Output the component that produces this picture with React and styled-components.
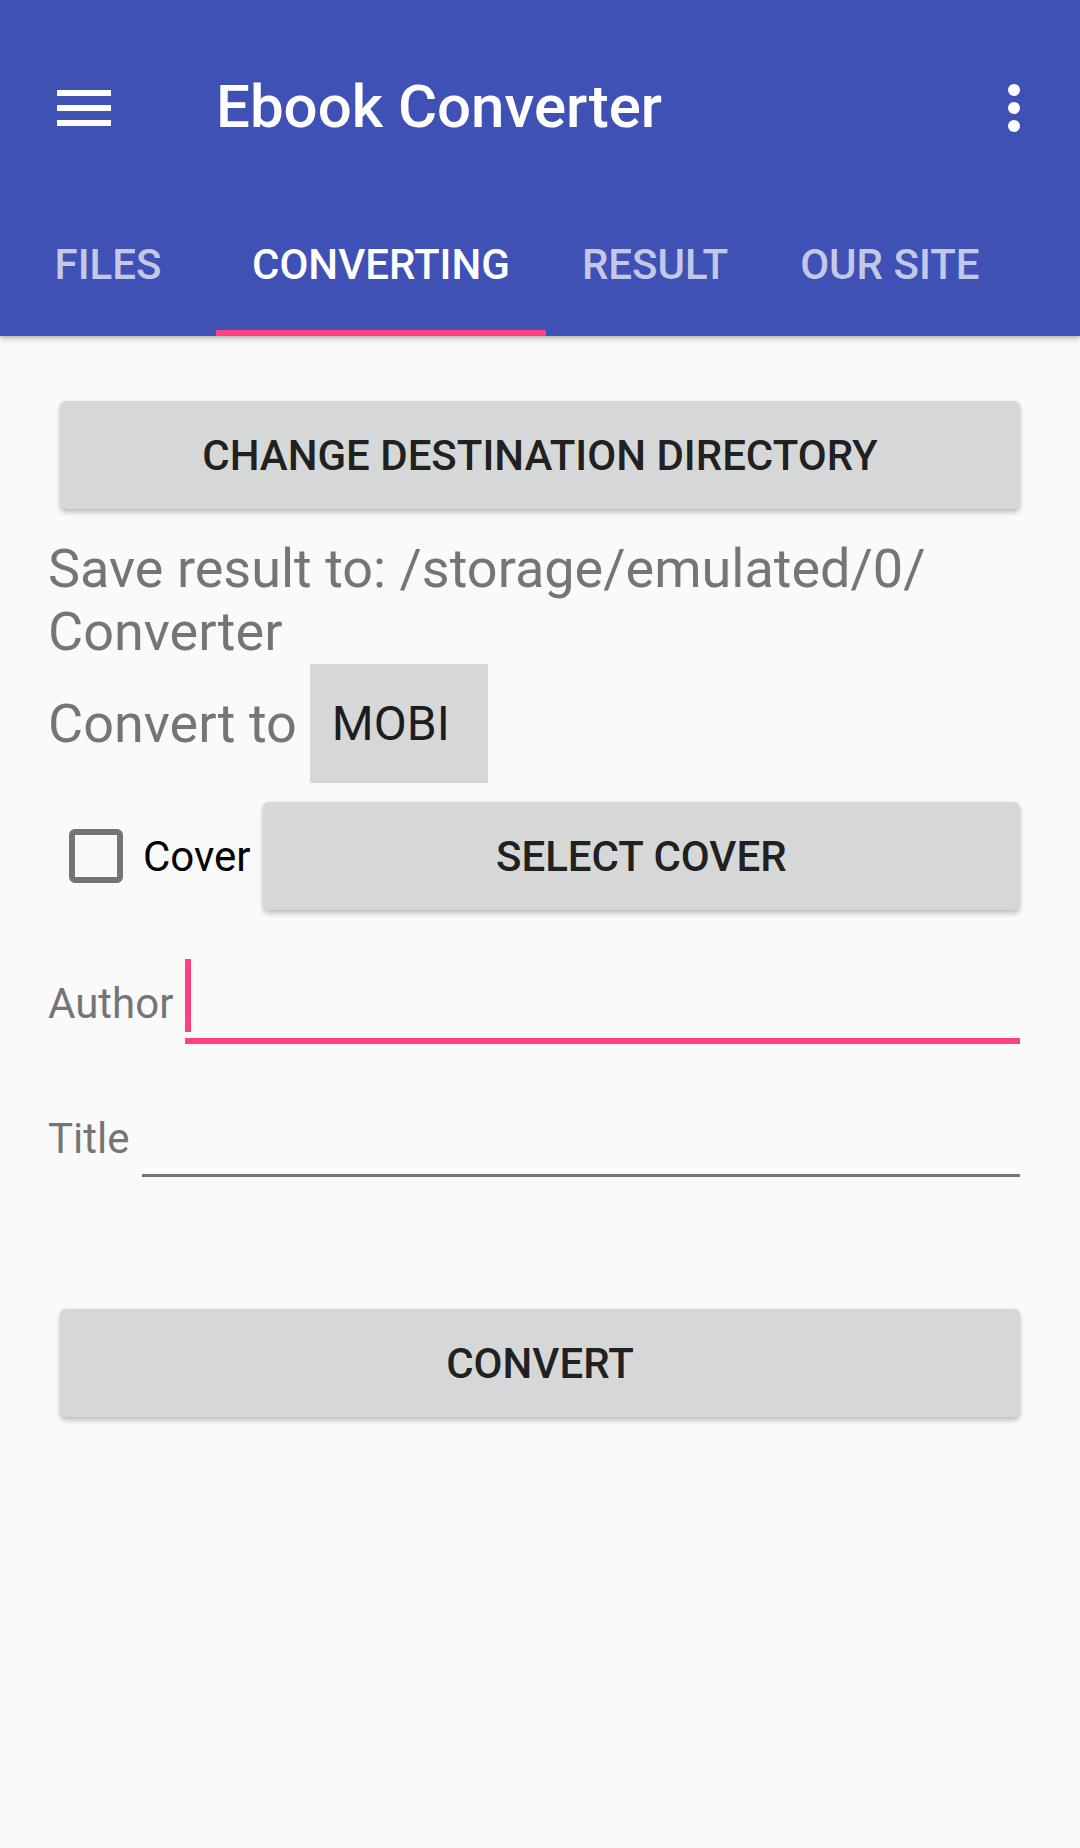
import React from "react";
import styled, { createGlobalStyle } from "styled-components";

const GlobalStyle = createGlobalStyle`
  html, body {
    margin: 0;
    padding: 0;
    background: #fafafa;
  }
  body {
    font-family: Roboto, "Noto Sans", "Liberation Sans", sans-serif;
  }
  * {
    box-sizing: border-box;
  }
`;

const tabs = ["Files", "Converting", "Result", "Our site"];

function MenuIcon() {
  return (
    <svg width="72" height="72" viewBox="0 0 24 24" fill="#fff">
      <path d="M3 18h18v-2H3v2zm0-5h18v-2H3v2zm0-7v2h18V6H3z" />
    </svg>
  );
}

function MoreIcon() {
  return (
    <svg width="72" height="72" viewBox="0 0 24 24" fill="#fff">
      <circle cx="12" cy="6" r="2" />
      <circle cx="12" cy="12" r="2" />
      <circle cx="12" cy="18" r="2" />
    </svg>
  );
}

function App() {
  return (
    <Screen>
      <GlobalStyle />
      <AppBar>
        <Toolbar>
          <MenuIcon />
          <Title>Ebook Converter</Title>
          <MoreIcon />
        </Toolbar>
        <TabBar>
          {tabs.map((t) => (
            <Tab key={t} active={t === "Converting"}>
              {t}
            </Tab>
          ))}
        </TabBar>
      </AppBar>

      <Content>
        <RaisedButton>Change destination directory</RaisedButton>

        <SavePath>
          Save result to: /storage/emulated/0/<wbr />Converter
        </SavePath>

        <ConvertRow>
          <BigLabel>Convert to</BigLabel>
          <Spinner>MOBI</Spinner>
        </ConvertRow>

        <CoverRow>
          <CheckWrap>
            <CheckBox />
            <CheckText>Cover</CheckText>
          </CheckWrap>
          <RaisedButton grow>Select cover</RaisedButton>
        </CoverRow>

        <FieldRow>
          <FieldLabel>Author</FieldLabel>
          <Field>
            <Caret />
            <Underline focused />
          </Field>
        </FieldRow>

        <FieldRow>
          <FieldLabel>Title</FieldLabel>
          <Field>
            <Underline />
          </Field>
        </FieldRow>

        <RaisedButton top={111}>Convert</RaisedButton>
      </Content>
    </Screen>
  );
}

export default App;

const Screen = styled.div`
  min-height: 100vh;
  background: #fafafa;
`;

const AppBar = styled.header`
  position: relative;
  z-index: 2;
  background: #3f51b5;
  box-shadow: 0 3px 6px rgba(0, 0, 0, 0.22), 0 1px 2px rgba(0, 0, 0, 0.12);
`;

const Toolbar = styled.div`
  height: 192px;
  padding: 23px 30px 0 48px;
  display: flex;
  align-items: center;
`;

const Title = styled.h1`
  flex: 1;
  margin: 0 0 0 96px;
  font-size: 60px;
  font-weight: 500;
  color: #fff;
  line-height: 1.17;
`;

const TabBar = styled.nav`
  height: 144px;
  display: flex;
`;

const Tab = styled.div`
  position: relative;
  min-width: 216px;
  padding: 0 36px;
  display: flex;
  align-items: center;
  justify-content: center;
  font-size: 42px;
  font-weight: 500;
  text-transform: uppercase;
  color: ${(p) => (p.active ? "#ffffff" : "rgba(255, 255, 255, 0.7)")};

  &::after {
    content: "";
    display: ${(p) => (p.active ? "block" : "none")};
    position: absolute;
    left: 0;
    right: 0;
    bottom: 0;
    height: 6px;
    background: #ff4081;
  }
`;

const Content = styled.main`
  padding: 47px 48px 0;
  display: flex;
  flex-direction: column;
`;

const RaisedButton = styled.div`
  flex: ${(p) => (p.grow ? 1 : "none")};
  height: 108px;
  margin: ${(p) => p.top || 18}px 12px 18px;
  display: flex;
  align-items: center;
  justify-content: center;
  background: #d6d7d7;
  border-radius: 6px;
  box-shadow: 0 4px 5px rgba(0, 0, 0, 0.2), 0 0 3px rgba(0, 0, 0, 0.1);
  font-size: 42px;
  font-weight: 500;
  text-transform: uppercase;
  color: rgba(0, 0, 0, 0.87);
`;

const SavePath = styled.p`
  margin: 10px 0 0;
  font-size: 54px;
  line-height: 63px;
  color: #757575;
`;

const ConvertRow = styled.div`
  margin-top: 1px;
  display: flex;
  align-items: center;
`;

const BigLabel = styled.span`
  font-size: 54px;
  line-height: 63px;
  color: #757575;
`;

const Spinner = styled.div`
  width: 178px;
  height: 119px;
  margin-left: 13px;
  padding-left: 22px;
  display: flex;
  align-items: center;
  background: #d6d7d7;
  font-size: 48px;
  color: #1d1d1d;
`;

const CoverRow = styled.div`
  margin-top: 1px;
  display: flex;
  align-items: center;
`;

const CheckWrap = styled.label`
  display: flex;
  align-items: center;
  padding-left: 21px;
`;

const CheckBox = styled.span`
  width: 54px;
  height: 54px;
  border: 6px solid #757575;
  border-radius: 6px;
`;

const CheckText = styled.span`
  margin-left: 20px;
  font-size: 42px;
  color: #000;
`;

const FieldRow = styled.div`
  height: 135px;
  display: flex;
  align-items: flex-end;
`;

const FieldLabel = styled.span`
  margin-bottom: 35px;
  font-size: 42px;
  line-height: 49px;
  color: #757575;
`;

const Field = styled.div`
  flex: 1;
  height: 85px;
  margin-bottom: 19px;
  display: flex;
  flex-direction: column;
  justify-content: flex-end;
`;

const Caret = styled.span`
  width: 6px;
  height: 73px;
  margin: 0 0 6px 12px;
  background: #ff4081;
`;

const Underline = styled.span`
  height: ${(p) => (p.focused ? 6 : 3)}px;
  margin: 0 12px ${(p) => (p.focused ? 0 : 2)}px;
  background: ${(p) => (p.focused ? "#ff4081" : "#757575")};
`;
